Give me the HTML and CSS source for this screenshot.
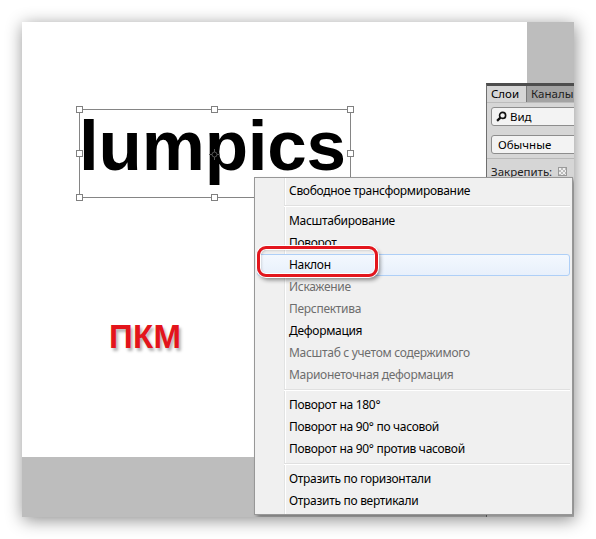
FILE: index.html
```html
<!DOCTYPE html>
<html lang="ru">
<head>
    <meta charset="UTF-8">
    <title>Свободное трансформирование</title>
    <link rel="stylesheet" href="styles.css">
</head>
<body>
    <div class="shot">
        <div class="canvas">
            <div class="transform">
                <span class="word">lumpics</span>
                <i class="handle tl"></i>
                <i class="handle tc"></i>
                <i class="handle tr"></i>
                <i class="handle ml"></i>
                <i class="handle mr"></i>
                <i class="handle bl"></i>
                <i class="handle bc"></i>
                <i class="handle br"></i>
                <svg class="pivot" viewBox="0 0 11 11" fill="none" stroke="#555" stroke-width="1">
                    <circle cx="5.5" cy="5.5" r="2.5"/>
                    <path d="M5.5 0v3M5.5 8v3M0 5.5h3M8 5.5h3"/>
                </svg>
            </div>
            <div class="rmb">ПКМ</div>
        </div>

        <aside class="panel">
            <div class="tabs">
                <span class="tab active">Слои</span>
                <span class="tab">Каналы</span>
            </div>
            <div class="panel-body">
                <div class="field">
                    <svg class="search-icon" viewBox="0 0 12 12" fill="none" stroke="#111">
                        <circle cx="7.2" cy="4.8" r="3.3" stroke-width="1.8"/>
                        <path d="M4.8 7.2 1.2 10.8" stroke-width="2.4"/>
                    </svg>
                    <span>Вид</span>
                </div>
                <div class="field select">Обычные</div>
                <div class="lock-row">
                    <span>Закрепить:</span>
                    <span class="checker"></span>
                </div>
            </div>
        </aside>

        <ul class="menu">
            <li>Свободное трансформирование</li>
            <li class="sep"></li>
            <li>Масштабирование</li>
            <li>Поворот</li>
            <li class="hover">Наклон</li>
            <li class="off">Искажение</li>
            <li class="off">Перспектива</li>
            <li>Деформация</li>
            <li class="off">Масштаб с учетом содержимого</li>
            <li class="off">Марионеточная деформация</li>
            <li class="sep"></li>
            <li>Поворот на 180°</li>
            <li>Поворот на 90° по часовой</li>
            <li>Поворот на 90° против часовой</li>
            <li class="sep"></li>
            <li>Отразить по горизонтали</li>
            <li>Отразить по вертикали</li>
        </ul>

        <div class="callout"></div>
    </div>
</body>
</html>
```

FILE: styles.css
```css
* {
    margin: 0;
    padding: 0;
    box-sizing: border-box;
}

body {
    background: #ffffff;
    padding: 22px;
    font-family: 'Noto Sans', 'Open Sans', sans-serif;
}

.shot {
    position: relative;
    width: 552px;
    height: 495px;
    background: #bdbdbd;
    overflow: hidden;
    box-shadow: 1px 3px 16px rgba(0, 0, 0, 0.45);
}

/* canvas with the text layer */
.canvas {
    position: relative;
    width: 505px;
    height: 435px;
    background: #ffffff;
}

.transform {
    position: absolute;
    left: 57px;
    top: 87px;
    width: 272px;
    height: 89px;
    border: 1px solid #858585;
}

.word {
    display: block;
    margin-left: -1px;
    font-family: 'Liberation Sans', Arial, sans-serif;
    font-weight: 700;
    font-size: 71px;
    line-height: 71px;
    color: #000000;
    letter-spacing: -0.2px;
}

.handle {
    position: absolute;
    width: 7px;
    height: 7px;
    background: #ffffff;
    border: 1px solid #808080;
}

.tl, .tc, .tr { top: -4px; }
.ml, .mr { top: calc(50% - 4px); }
.bl, .bc, .br { bottom: -4px; }
.tl, .ml, .bl { left: -4px; }
.tc, .bc { left: calc(50% - 4px); }
.tr, .mr, .br { right: -4px; }

.pivot {
    position: absolute;
    left: calc(50% - 6px);
    top: calc(50% - 5px);
    width: 11px;
    height: 11px;
}

.rmb {
    position: absolute;
    left: 87px;
    top: 297px;
    font-family: 'Liberation Sans', Arial, sans-serif;
    font-weight: 700;
    font-size: 33px;
    line-height: 36px;
    letter-spacing: 0.3px;
    color: #e3141b;
    text-shadow: 2px 3px 3px rgba(0, 0, 0, 0.3);
}

/* layers panel */
.panel {
    position: absolute;
    left: 464px;
    top: 61px;
    width: 110px;
    bottom: 0;
    background: #d6d6d6;
    border-top: 3px solid #4e4e4e;
    border-left: 1px solid #6f6f6f;
    font-size: 11.5px;
    color: #000000;
}

.tabs {
    display: flex;
    height: 17px;
    background: #a3a3a3;
    border-bottom: 1px solid #bcbcbc;
}

.tab {
    padding: 0 4px;
    line-height: 16px;
    color: #1e1e1e;
    border-right: 1px solid #7a7a7a;
}

.tab.active {
    width: 40px;
    background: #d6d6d6;
    color: #000000;
}

.panel-body {
    padding: 4px 0 0 4px;
}

.field {
    display: flex;
    align-items: center;
    gap: 3px;
    height: 19px;
    padding-left: 4px;
    background: #f3f3f3;
    border: 1px solid #8d8d8d;
    border-radius: 3px;
}

.search-icon {
    width: 11px;
    height: 11px;
}

.select {
    margin-top: 9px;
    padding-left: 6px;
}

.lock-row {
    display: flex;
    align-items: center;
    gap: 6px;
    margin: 4px 0 0 -4px;
    padding: 5px 0 0 4px;
    border-top: 1px solid #b8b8b8;
    color: #222222;
}

.checker {
    width: 9px;
    height: 9px;
    border: 1px solid #9a9a9a;
    background:
        linear-gradient(45deg, #bcbcbc 25%, transparent 25%, transparent 75%, #bcbcbc 75%),
        linear-gradient(45deg, #bcbcbc 25%, #efefef 25%, #efefef 75%, #bcbcbc 75%);
    background-size: 4px 4px;
    background-position: 0 0, 2px 2px;
}

/* context menu */
.menu {
    position: absolute;
    left: 232px;
    top: 155px;
    width: 319px;
    height: 338px;
    padding: 2px;
    list-style: none;
    background: #f0f0f0;
    border: 1px solid #979797;
    box-shadow: 3px 3px 4px rgba(0, 0, 0, 0.35);
    font-size: 12px;
    letter-spacing: -0.3px;
    color: #000000;
}

.menu::before {
    content: "";
    position: absolute;
    left: 29px;
    top: 0;
    bottom: 0;
    width: 1px;
    background: #e2e3e3;
    box-shadow: 1px 0 0 #ffffff;
}

.menu li {
    position: relative;
    height: 22px;
    line-height: 22px;
    padding-left: 32px;
    white-space: nowrap;
}

.menu li.off {
    color: #6d6d6d;
}

.menu li.hover {
    padding-left: 31px;
    line-height: 20px;
    border: 1px solid #aecff7;
    border-radius: 3px;
    background: linear-gradient(#f3f8fe, #e8f0fb);
}

.menu li.sep {
    height: 8px;
}

.menu li.sep::after {
    content: "";
    position: absolute;
    left: 27px;
    right: 0;
    top: 3px;
    height: 1px;
    background: #e0e0e0;
    box-shadow: 0 1px 0 #ffffff;
}

/* red mark over the hovered item */
.callout {
    position: absolute;
    left: 235px;
    top: 224px;
    width: 121px;
    height: 31px;
    border: 3px solid #e3161d;
    border-radius: 9px;
    box-shadow:
        inset 0 0 0 1px #ffffff,
        inset 1px 1px 3px rgba(0, 0, 0, 0.25),
        0 0 0 1px #ffffff,
        2px 3px 4px rgba(0, 0, 0, 0.45);
}
```
